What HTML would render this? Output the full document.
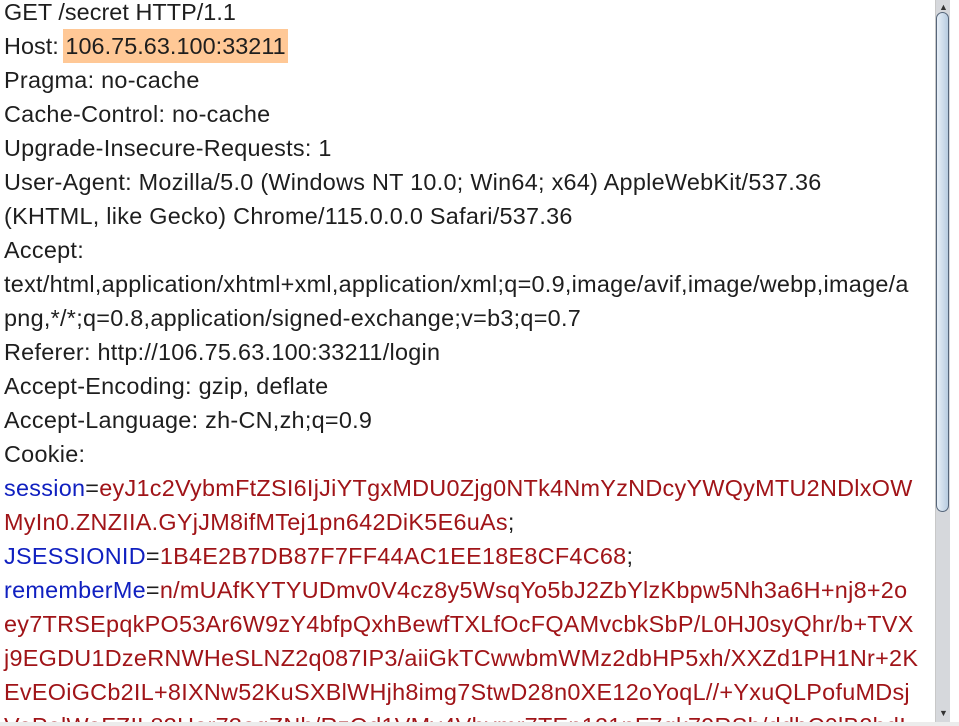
<!DOCTYPE html>
<html><head><meta charset="utf-8"><style>
html,body{margin:0;padding:0;background:#fff;width:959px;height:726px;overflow:hidden;position:relative}
pre{margin:0;position:absolute;left:4px;top:-5px;font-family:"Liberation Sans",Arial,sans-serif;font-size:23.4px;line-height:34px;color:#1e1e1e;white-space:pre;letter-spacing:0.28px}
.t{letter-spacing:0.05px}
.h{background:#ffc896;padding:4px 2px;margin:0 -2px}
.k{color:#1020c0}.v{color:#a01418}
.sb{position:absolute;left:935px;top:0;width:14px;height:722px;background:#d6d8dc;border-left:1px solid #c8c8c8}
.th{position:absolute;left:0;top:12px;width:13px;height:500px;background:linear-gradient(90deg,#e8f0f8,#b8cce0);border:1px solid #56667a;border-radius:7px;box-sizing:border-box}
.bot{position:absolute;left:0;top:722px;width:959px;height:4px;background:#ececec}
</style></head><body>
<pre><span class="t">GET /secret HTTP/1.1
Host: <span class="h">106.75.63.100:33211</span></span>
Pragma: no-cache
Cache-Control: no-cache
Upgrade-Insecure-Requests: 1
User-Agent: Mozilla/5.0 (Windows NT 10.0; Win64; x64) AppleWebKit/537.36
(KHTML, like Gecko) Chrome/115.0.0.0 Safari/537.36
Accept:
text/html,application/xhtml+xml,application/xml;q=0.9,image/avif,image/webp,image/a
png,*/*;q=0.8,application/signed-exchange;v=b3;q=0.7
Referer: http://106.75.63.100:33211/login
Accept-Encoding: gzip, deflate
Accept-Language: zh-CN,zh;q=0.9
Cookie:
<span class="k">session</span>=<span class="v">eyJ1c2VybmFtZSI6IjJiYTgxMDU0Zjg0NTk4NmYzNDcyYWQyMTU2NDlxOW</span>
<span class="v">MyIn0.ZNZIIA.GYjJM8ifMTej1pn642DiK5E6uAs</span>;
<span class="k">JSESSIONID</span>=<span class="v">1B4E2B7DB87F7FF44AC1EE18E8CF4C68</span>;
<span class="k">rememberMe</span>=<span class="v">n/mUAfKYTYUDmv0V4cz8y5WsqYo5bJ2ZbYlzKbpw5Nh3a6H+nj8+2o</span>
<span class="v">ey7TRSEpqkPO53Ar6W9zY4bfpQxhBewfTXLfOcFQAMvcbkSbP/L0HJ0syQhr/b+TVX</span>
<span class="v">j9EGDU1DzeRNWHeSLNZ2q087IP3/aiiGkTCwwbmWMz2dbHP5xh/XXZd1PH1Nr+2K</span>
<span class="v">EvEOiGCb2IL+8IXNw52KuSXBlWHjh8img7StwD28n0XE12oYoqL//+YxuQLPofuMDsj</span>
<span class="v">VePalWaFZIL83Hor73oqZNb/RzOd1VMy4Vbvmr7TEn121nF7gk79RSh/ddbC0lB2bdI</span></pre>
<div class="sb"><div style="position:absolute;left:3px;top:2px;font-size:9px;color:#333">▲</div><div class="th"></div><div style="position:absolute;left:3px;top:708px;font-size:9px;color:#333">▼</div></div>
<div class="bot"></div>
</body></html>
